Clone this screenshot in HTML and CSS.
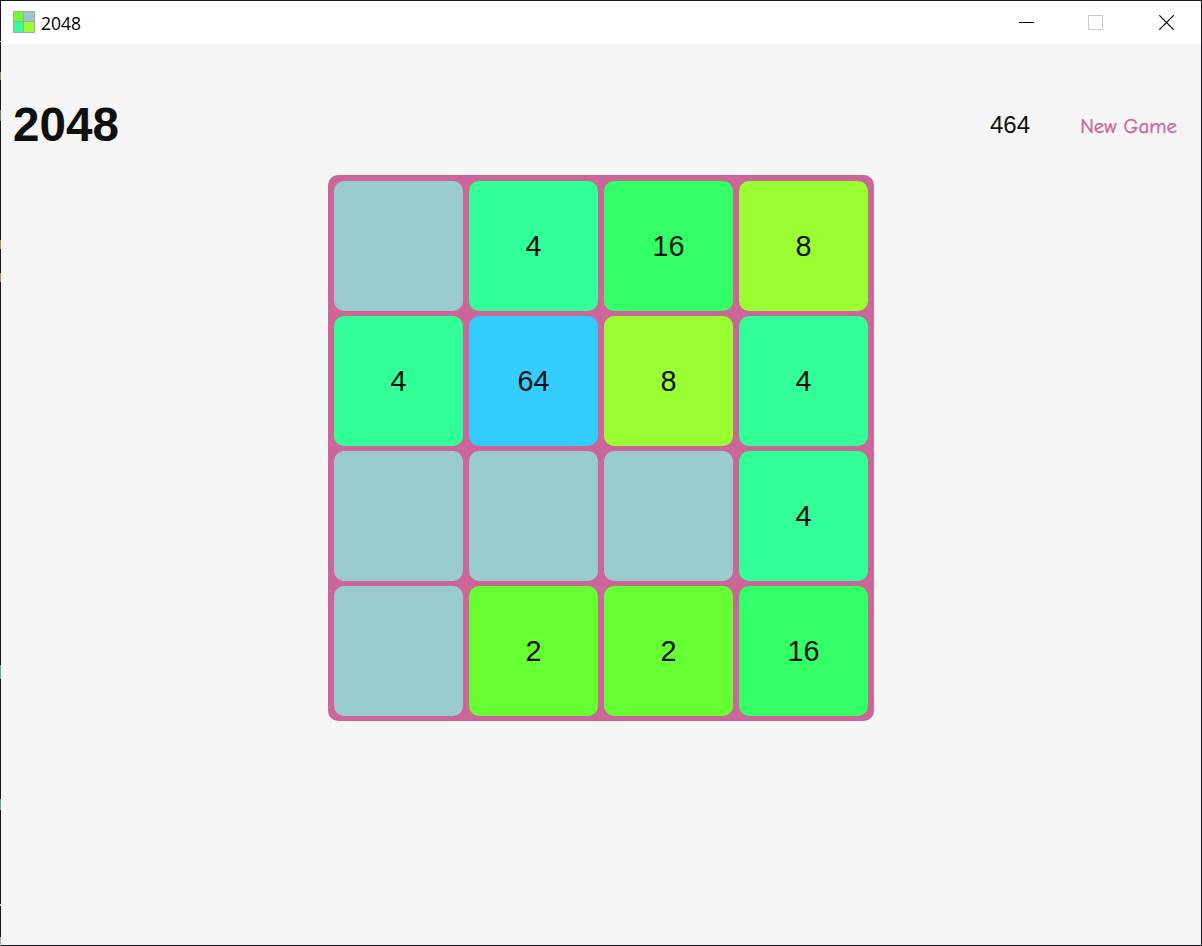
FILE: index.html
```html
<!DOCTYPE html>
<html lang="en">
<head>
<meta charset="utf-8">
<title>2048</title>
<link rel="stylesheet" href="styles.css">
</head>
<body>
<div class="window">
  <header class="titlebar">
    <svg class="app-icon" width="22" height="22" viewBox="0 0 22 22" shape-rendering="crispEdges">
      <rect width="22" height="22" fill="#a8a89c"/>
      <rect x="1" y="1" width="9" height="9" fill="#66ff33"/>
      <rect x="11" y="1" width="10" height="9" fill="#99c8cc"/>
      <rect x="1" y="11" width="9" height="10" fill="#33ff99"/>
      <rect x="11" y="11" width="10" height="10" fill="#99ff33"/>
    </svg>
    <span class="window-title">2048</span>
    <div class="controls">
      <svg width="15" height="15" viewBox="0 0 15 15"><path d="M0 7.5H15" stroke="#000"/></svg>
      <svg width="15" height="15" viewBox="0 0 15 15"><rect x=".5" y=".5" width="14" height="14" fill="none" stroke="#ccc"/></svg>
      <svg width="15" height="15" viewBox="0 0 15 15"><path d="M.3 .3 14.7 14.7M14.7 .3 .3 14.7" stroke="#000" stroke-width="1.15"/></svg>
    </div>
  </header>
  <main class="game">
    <div class="toolbar">
      <h1 class="heading">2048</h1>
      <span class="score">464</span>
      <button class="new-game">New Game</button>
    </div>
    <div class="board">
      <div class="tile"></div><div class="tile t4">4</div><div class="tile t16">16</div><div class="tile t8">8</div>
      <div class="tile t4">4</div><div class="tile t64">64</div><div class="tile t8">8</div><div class="tile t4">4</div>
      <div class="tile"></div><div class="tile"></div><div class="tile"></div><div class="tile t4">4</div>
      <div class="tile"></div><div class="tile t2">2</div><div class="tile t2">2</div><div class="tile t16">16</div>
    </div>
  </main>
</div>
</body>
</html>
```
FILE: styles.css
```css
* { box-sizing: border-box; }
body { margin: 0; overflow: hidden; }
.window {
  position: relative;
  width: 1202px;
  height: 946px;
  border: 1px solid #17171c;
  background: #f5f5f5;
  color: #101010;
  font-family: "Liberation Sans", Arial, sans-serif;
}
/* Desktop showing through at the left window edge */
.window::before {
  content: "";
  position: absolute;
  left: -1px;
  top: -1px;
  width: 1px;
  height: 946px;
  background: linear-gradient(
    transparent 41px, #ccc 41px 42px, transparent 42px 72px,
    #a58060 72px 80px, transparent 80px 110px, #777 110px 121px,
    transparent 121px 240px, #b88850 240px 249px, transparent 249px 273px,
    #b88850 273px 282px, transparent 282px 665px, #63a894 665px 679px,
    transparent 679px 799px, #63a894 799px 810px, transparent 810px 904px,
    #ccc 904px 906px, transparent 906px 937px, #8fb5b0 937px);
}
.titlebar {
  display: flex;
  align-items: center;
  height: 43px;
  padding: 0 27px 0 12px;
  background: #fff;
}
.app-icon { margin-bottom: 1px; }
.window-title {
  margin-left: 6px;
  font: 17.5px "Open Sans", sans-serif;
  color: #000;
}
.controls { display: flex; gap: 56px; margin-left: auto; }
.controls svg { display: block; }
.controls svg:first-child { margin-right: -2px; }
.toolbar {
  display: flex;
  align-items: center;
  height: 131px;
  padding: 31px 24px 0 12px;
}
.heading { margin: 0; font-size: 47.6px; line-height: 56px; }
.score { margin-left: auto; font-size: 24px; line-height: 28px; }
.new-game {
  width: 97px;
  margin-left: 50px;
  padding: 2px 0 0;
  border: 0;
  background: none;
  color: #cc6699;
  font: 20.8px "Comic Sans MS", "Comic Neue", Lato, sans-serif;
  -webkit-text-stroke: .4px #cc6699;
  white-space: nowrap;
}
.board {
  display: grid;
  grid-template: repeat(4, 130px) / repeat(4, 129px);
  gap: 5px 6px;
  width: 546px;
  margin: 0 auto;
  padding: 6px 6px 5px;
  border-radius: 10px;
  background: #cc6699;
}
.tile {
  display: flex;
  align-items: center;
  justify-content: center;
  border-radius: 10px;
  background: #99cccc;
  font-size: 28.8px;
}
.t2 { background: #66ff33; }
.t4 { background: #33ff99; }
.t8 { background: #99ff33; }
.t16 { background: #33ff66; }
.t64 { background: #33ccff; }
```
